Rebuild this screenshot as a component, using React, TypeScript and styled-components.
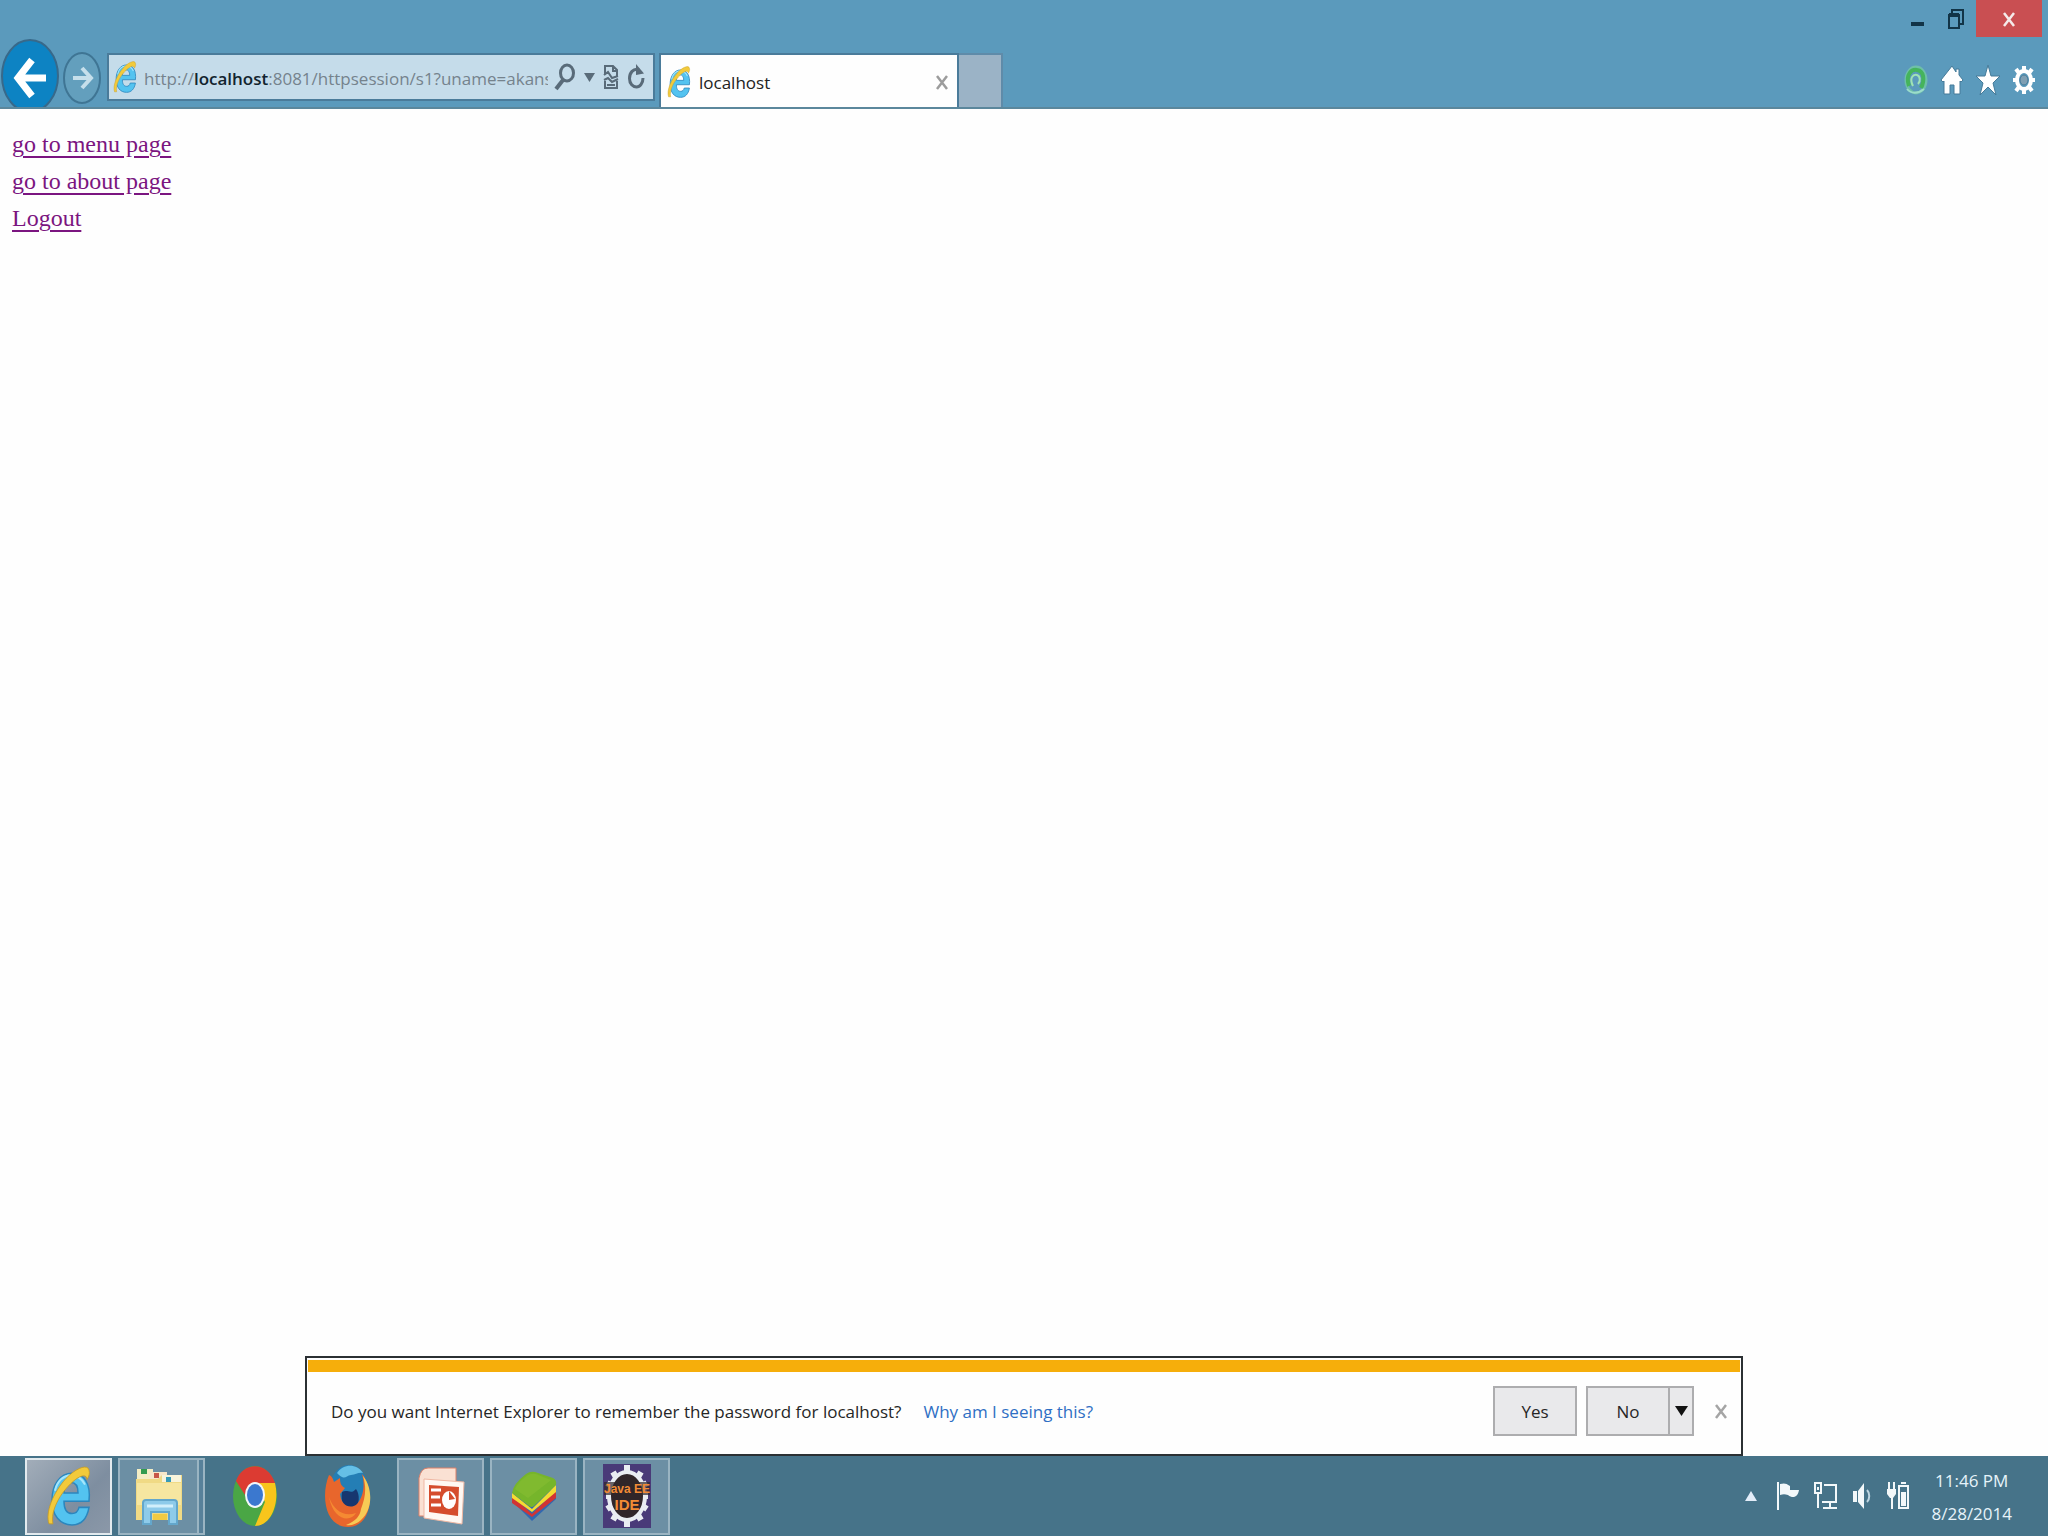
import React, { useState } from "react";
import styled, { createGlobalStyle, css } from "styled-components";

const ui = `"Open Sans", "Noto Sans", sans-serif`;

const GlobalStyle = createGlobalStyle`
  *, *::before, *::after { box-sizing: border-box; }
  body { margin: 0; background: #fefefe; font-family: ${ui}; font-size: 17px; }
  button, input { font: inherit; color: inherit; margin: 0; padding: 0; border: 0; background: none; }
  svg { display: block; flex: none; }
`;

const Desktop = styled.div`
  display: flex;
  flex-direction: column;
  min-height: 100vh;
`;

/* ---------- browser chrome ---------- */

const Chrome = styled.header`
  display: flex;
  flex-direction: column;
  background: #5b9abc;
  border-bottom: 2px solid #5b879c;
`;

const TitleBar = styled.div`
  display: flex;
  justify-content: flex-end;
  gap: 2px;
  height: 37px;
  padding-right: 6px;
`;

const WindowButton = styled.button<{ $close?: boolean }>`
  display: flex;
  align-items: center;
  justify-content: center;
  width: ${(p) => (p.$close ? 66 : 36)}px;
  background: ${(p) => (p.$close ? "#c94f52" : "transparent")};
`;

const NavRow = styled.div`
  display: flex;
  align-items: flex-end;
  height: 70px;
  overflow: hidden;
`;

const HistoryButtons = styled.div`
  display: flex;
  align-items: center;
  align-self: stretch;
  gap: 4px;
  width: 107px;
  padding-left: 1px;
`;

const PlainButton = styled.button`
  display: flex;
  align-items: center;
  justify-content: center;
`;

const AddressBar = styled.form`
  display: flex;
  align-items: center;
  align-self: flex-start;
  width: 548px;
  height: 48px;
  margin: 16px 4px 0 0;
  padding: 0 8px 0 4px;
  background: #c5dcea;
  border: 2px solid #4a7b9a;
`;

const AddressField = styled.label`
  position: relative;
  flex: 1;
  min-width: 0;
  height: 100%;
  margin: 0 6px 0 7px;
  overflow: hidden;
  line-height: 48px;
  color: #75838d;
`;

const AddressInput = styled.input`
  width: 100%;
  height: 100%;
  outline: none;
  color: #1c2a33;
`;

const AddressText = styled.span`
  position: absolute;
  inset: 0;
  white-space: nowrap;
  pointer-events: none;
`;

const Host = styled.span`
  font-weight: 600;
  color: #12242e;
`;

const AddressTools = styled.div`
  display: flex;
  align-items: center;
  gap: 8px;
`;

const Tab = styled.div`
  display: flex;
  align-items: center;
  width: 300px;
  height: 54px;
  padding: 2px 8px 0 6px;
  background: #fefefe;
  border: 2px solid #4a7b9a;
  border-bottom: 0;
`;

const TabTitle = styled.span`
  flex: 1;
  margin-left: 8px;
  color: #222;
`;

const NewTab = styled.button`
  width: 44px;
  height: 54px;
  background: #9bb3c6;
  border: 2px solid #5f8ba9;
  border-width: 2px 2px 0 0;
`;

const Commands = styled.div`
  display: flex;
  align-items: center;
  gap: 12px;
  height: 54px;
  margin-left: auto;
  padding-right: 12px;
`;

/* ---------- page ---------- */

const Page = styled.main`
  flex: 1;
  display: flex;
  flex-direction: column;
  align-items: flex-start;
  padding: 17px 12px;
`;

const PageLink = styled.a`
  font-family: "Liberation Serif", serif;
  font-size: 24px;
  line-height: 37px;
  color: #7b1580;
  text-decoration: underline;
  text-decoration-thickness: 2px;
  text-underline-offset: 4px;
`;

/* ---------- notification ---------- */

const Notice = styled.section`
  align-self: center;
  width: calc(100% - 64px);
  max-width: 1438px;
  padding: 2px 1px 0;
  background: #fefefe;
  border: 2px solid #2b3033;
`;

const NoticeStripe = styled.div`
  height: 12px;
  background: #f6ae0b;
`;

const NoticeBody = styled.div`
  display: flex;
  align-items: center;
  height: 82px;
  padding: 0 12px 4px 23px;
  color: #262626;
`;

const WhyLink = styled.a`
  margin-left: 22px;
  color: #2f6fc4;
  text-decoration: none;
`;

const NoticeActions = styled.div`
  display: flex;
  align-items: center;
  margin-left: auto;
`;

const face = css`
  height: 50px;
  background: #e9e9eb;
  border: 2px solid #adadaf;
`;

const ActionButton = styled.button`
  ${face}
  width: 84px;
`;

const SplitButton = styled.div`
  display: flex;
  margin: 0 20px 0 9px;
`;

const SplitArrow = styled.button`
  ${face}
  display: flex;
  align-items: center;
  justify-content: center;
  width: 24px;
  border-left: 0;
`;

/* ---------- taskbar ---------- */

const Taskbar = styled.footer`
  display: flex;
  align-items: center;
  justify-content: space-between;
  height: 80px;
  padding: 0 36px 0 25px;
  background: #467389;
`;

const Apps = styled.nav`
  display: flex;
  gap: 6px;
`;

const AppButton = styled.button<{ $state?: "active" | "open" }>`
  display: flex;
  align-items: center;
  justify-content: center;
  width: 87px;
  height: 77px;
  border: 2px solid transparent;
  ${(p) => p.$state === "active" && css`
    background: linear-gradient(135deg, #a2adb9, #7e8ea0 60%, #8b98a8);
    border-color: #e2eaee;
  `}
  ${(p) => p.$state === "open" && css`
    background: #6c8fa4;
    border-color: #9ab4c2;
  `}
`;

const AppStack = styled.div`
  display: flex;
  &::after {
    content: "";
    width: 6px;
    background: #58819a;
    border: 2px solid #9ab4c2;
    border-left: 0;
  }
  ${AppButton} { width: 81px; }
`;

const Tray = styled.div`
  display: flex;
  align-items: center;
  gap: 12px;
`;

const Clock = styled.time`
  margin: 2px 0 0 8px;
  line-height: 33px;
  text-align: center;
  color: #e6f3fa;
`;

/* ---------- drawings ---------- */

const IELogo = ({ w, h }: { w: number; h: number }) => (
  <svg width={w} height={h} viewBox="0 0 46 62" preserveAspectRatio="none">
    <path d="M43 36H18c0 8 3 12 8 12 4 0 6-2 7-6h10c-2 11-8 17-17 17C14 59 6 50 6 35 6 20 14 9 26 9c12 0 19 10 17 27ZM18 28h14c0-6-2-10-7-10s-7 4-7 10Z" fill="#53c3f0" stroke="#2c86bd" strokeWidth="1.5" fillRule="evenodd" />
    <path d="M9 26c2-9 8-15 16-15 6 0 11 3 14 9" fill="none" stroke="#a6e6fb" strokeWidth="2" />
    <path d="M3 58C-1 47 7 28 20 14 31 3 42 0 43 6c1 3 0 6-2 9 0-5-6-5-14 2C14 28 4 46 7 58Z" fill="#f2ca3b" stroke="#c79b23" strokeWidth=".8" />
  </svg>
);

const Cross = ({ color }: { color: string }) => (
  <svg width="14" height="18" viewBox="0 0 14 18">
    <path d="M2 3 12 16M12 3 2 16" stroke={color} strokeWidth="2.500" fill="none" />
  </svg>
);

const Back = () => (
  <svg width="58" height="70" viewBox="0 0 58 70">
    <ellipse cx="29" cy="39" rx="28" ry="36" fill="#0d83c3" stroke="#38698a" strokeWidth="2" />
    <path d="M45 41H17M31 23 17 41l14 18" fill="none" stroke="#fff" strokeWidth="7" />
  </svg>
);

const Forward = () => (
  <svg width="40" height="70" viewBox="0 -14 40 70">
    <ellipse cx="19" cy="27" rx="18" ry="25" fill="#639fbd" stroke="#3f7594" strokeWidth="2" />
    <path d="M10 27h18M19 17l9 10-9 10" fill="none" stroke="#c5dfeb" strokeWidth="4" />
  </svg>
);

const Search = () => (
  <svg width="22" height="28" viewBox="0 0 22 28">
    <ellipse cx="13" cy="10" rx="6.500" ry="8" fill="none" stroke="#596b79" strokeWidth="3" />
    <path d="M9 17 2 26" stroke="#596b79" strokeWidth="4" />
  </svg>
);

const Down = ({ color = "#596b79", w = 11, h = 9 }: { color?: string; w?: number; h?: number }) => (
  <svg width={w} height={h} viewBox="0 0 12 10" preserveAspectRatio="none">
    <path d="M0 0h12L6 10Z" fill={color} />
  </svg>
);

const Compat = () => (
  <svg width="16" height="26" viewBox="0 0 16 26" fill="none" stroke="#596b79" strokeWidth="2">
    <path d="M2 11V2h8l4 4v7M2 15v9h12v-7M10 2v5h4M1 11l4-3 4 6 6-2M1 16l4-2 4 4 6-3M4 21h8" />
  </svg>
);

const Refresh = () => (
  <svg width="18" height="26" viewBox="0 0 18 26">
    <path d="M12 5.500C6 4 2.500 9 2.500 14.500S6 23 9.500 23s6.500-4 6.500-9" fill="none" stroke="#596b79" strokeWidth="3" />
    <path d="M9 0v11l8-1.500Z" fill="#596b79" />
  </svg>
);

const Swirl = () => (
  <svg width="24" height="30" viewBox="0 0 24 30" fill="none">
    <ellipse cx="12" cy="15" rx="10" ry="13" stroke="#77cfa2" strokeWidth="3" opacity=".7" />
    <path d="M5 21C1 9 8 4 13 5c7 1 8 10 4 18" stroke="#45b45c" strokeWidth="4" />
    <path d="M9 21c-4-8 0-12 4-11 3 1 4 6 1 9" stroke="#a0e3b4" strokeWidth="2" />
    <path d="M3 24c4 5 11 5 17 0" stroke="#9bdccb" strokeWidth="2" />
  </svg>
);

const Home = () => (
  <svg width="24" height="30" viewBox="0 0 24 30">
    <path d="M12 1 1 15l2 2 1-1v13h6v-9h4v9h6V16l1 1 2-2-4-5V4h-3v3Z" fill="#fff" stroke="#467b99" />
  </svg>
);

const Star = () => (
  <svg width="24" height="30" viewBox="0 0 24 30">
    <path d="m12 0 3 11h9l-7 7 3 12-8-8-8 8 3-12-7-7h9Z" fill="#fff" stroke="#467b99" />
  </svg>
);

const Gear = () => (
  <svg width="24" height="30" viewBox="0 0 24 30">
    <g stroke="#fff" strokeWidth="4">
      <path d="M12 1v28M1 15h22M4 4l16 22M20 4 4 26" />
    </g>
    <ellipse cx="12" cy="15" rx="7" ry="9" fill="#5b9abc" stroke="#fff" strokeWidth="4" />
    <ellipse cx="12" cy="15" rx="4" ry="5" fill="#7f9fb3" stroke="#467b99" />
  </svg>
);

const Explorer = () => (
  <svg width="48" height="58" viewBox="0 0 48 58">
    <path d="M2 2h16v10H2Z" fill="#f3edc5" />
    <path d="M14 5h18v10H14Z" fill="#f8e7c9" />
    <path d="M1 12h22l4-4h20v45H1Z" fill="#f0da85" />
    <path d="M27 8h19v7H27Z" fill="#f8f4db" />
    <path d="M2 16h44v22H2Z" fill="#f6e6a0" />
    <path d="M6 2h6v5H6Z" fill="#329b50" />
    <path d="M19 6h5v5h-5Z" fill="#c75648" />
    <path d="M31 10h5v5h-5Z" fill="#379bb8" />
    <path d="M8 57V36q0-3 3-3h28q3 0 3 3v21h-8V45H16v12Z" fill="#8ecbea" stroke="#63a7cc" strokeWidth="2" />
    <path d="M12 39h26" stroke="#d2effb" strokeWidth="3" />
    <path d="M18 47h14v6H18Z" fill="#f2ca42" />
  </svg>
);

const ChromeLogo = () => (
  <svg width="44" height="62" viewBox="0 0 44 62">
    <ellipse cx="22" cy="31" rx="22" ry="30" fill="#4aa645" />
    <path d="M3 16C10-4 35-4 42 18H22L12 30Z" fill="#dc3b32" />
    <path d="M22 18h20c5 20-4 43-20 43l10-24Z" fill="#f8c51c" />
    <ellipse cx="22" cy="30" rx="10" ry="13" fill="#f4f7fa" />
    <ellipse cx="22" cy="30" rx="8" ry="11" fill="#3b78cf" />
  </svg>
);

const FirefoxLogo = () => (
  <svg width="46" height="64" viewBox="0 0 46 64">
    <ellipse cx="24" cy="28" rx="20" ry="27" fill="#247eb5" />
    <path d="M12 9C19-1 32 0 38 9c-5-1-7 2-12 2-6 1-6 6-14-2Z" fill="#65bfe6" />
    <path d="M17 28c6-3 9 3 14-3 4 5 4 16-2 20-7 3-14-4-12-17Z" fill="#17366f" />
    <path d="M4 11c3 1 4 4 5 7l6-4c0 5 1 8 5 10l-5 6c1 11 10 16 17 10 7-8 8-20 5-30 13 15 11 53-14 53C-1 63-4 30 4 11Z" fill="#e8662c" />
    <path d="M38 12c10 12 10 34-2 44-4 4-10 6-15 5 10-4 14-9 15-16 4-11 6-20 2-33Z" fill="#f7ca55" />
    <path d="M4 33c5 14 15 20 27 16-5 9-22 9-27-16Z" fill="#f58a32" />
  </svg>
);

const PowerPoint = () => (
  <svg width="48" height="60" viewBox="0 0 48 60">
    <path d="M2 12Q4 2 11 2h28v48H2Z" fill="#fae1d3" stroke="#dc8068" />
    <path d="m7 13 40 3-2 42-38-6Z" fill="#fff8f2" stroke="#efb7a3" />
    <path d="m12 19 30 2-1 29-29-4Z" fill="#d54d2d" />
    <path d="M14 24h10M14 31h9M14 39h10" stroke="#fff" strokeWidth="3" />
    <ellipse cx="32" cy="34" rx="7" ry="9" fill="#fff" />
    <path d="M32 34V25l6 8Z" fill="#d54d2d" />
  </svg>
);

const BlueStacks = () => (
  <svg width="46" height="52" viewBox="0 0 46 52">
    <path d="m1 31 20 20 24-22v-9L1 24Z" fill="#3268b0" />
    <path d="m1 26 20 18 24-24v8L21 47 1 33Z" fill="#d13434" />
    <path d="m1 23 20 16 24-24v7L21 42 1 28Z" fill="#f4dc31" />
    <path d="M1 23Q2 14 15 4q4-3 9-2l18 6q4 2 3 7L23 36q-2 2-5 0Z" fill="#76b52b" />
    <path d="M4 19Q7 12 17 5q4-2 8-1l15 6-23 18Z" fill="#8ac034" opacity=".5" />
  </svg>
);

const JavaEE = () => (
  <svg width="48" height="64" viewBox="0 0 48 64">
    <path d="M0 0h48v64H0Z" fill="#493a78" />
    <g stroke="#e9edf2" strokeWidth="6">
      <path d="M24 1v62M3 32h42M10 8l28 48M38 8 10 56M4 19l40 26M44 19 4 45" />
    </g>
    <ellipse cx="24" cy="32" rx="18" ry="24" fill="#302629" stroke="#e9edf2" strokeWidth="4" />
    <path d="M1 18h46v13H1Z" fill="#302629" opacity=".7" />
    <g fill="#f28b35" fontFamily="Liberation Sans, Arial, sans-serif" fontWeight="700" textAnchor="middle">
      <text x="24" y="29" fontSize="12">Java EE</text>
      <text x="24" y="46" fontSize="15">IDE</text>
    </g>
  </svg>
);

const Flag = () => (
  <svg width="26" height="32" viewBox="0 0 26 32">
    <path d="M3 2v28" stroke="#f3f8fa" strokeWidth="2" />
    <path d="M5 4c4-1 6-1 10 2v4h9c-1 7-6 9-11 5-3-1-5-1-8 0Z" fill="#f3f8fa" />
  </svg>
);

const Network = () => (
  <svg width="26" height="32" viewBox="0 0 26 32" fill="none" stroke="#f3f8fa" strokeWidth="2">
    <path d="M2 3h6v10H2ZM5 13v15M5 7v3M11 5h12v17H9M17 22v6M10 28h14" />
  </svg>
);

const Speaker = () => (
  <svg width="22" height="32" viewBox="0 0 22 32">
    <path d="M2 11h4v11H2ZM7 11l6-8v26l-6-7Z" fill="#f3f8fa" />
    <path d="M16 10c3 3 3 9 0 12" stroke="#bdd5e1" strokeWidth="2" fill="none" />
  </svg>
);

const Battery = () => (
  <svg width="26" height="32" viewBox="0 0 26 32" fill="none" stroke="#f3f8fa" strokeWidth="2">
    <path d="M4 2v7M9 2v7M7 16v13M14 6h9v22h-9ZM16 3h5" />
    <path d="M2 9h9v5l-3 4H5l-3-4Z" fill="#f3f8fa" stroke="none" />
    <path d="M16 12h5v14h-5Z" fill="#f3f8fa" stroke="none" />
  </svg>
);

/* ---------- screen ---------- */

export default function App() {
  const [url, setUrl] = useState("http://localhost:8081/httpsession/s1?uname=akans");
  const [editing, setEditing] = useState(false);
  const [noticeOpen, setNoticeOpen] = useState(true);
  const parts = url.match(/^(\w+:\/\/)?([^:/]*)(.*)$/) ?? ["", "", url, ""];
  const dismiss = () => setNoticeOpen(false);

  return (
    <Desktop>
      <GlobalStyle />
      <Chrome>
        <TitleBar>
          <WindowButton aria-label="Minimize">
            <svg width="14" height="18" viewBox="0 0 14 18"><path d="M0 12h13v4H0Z" fill="#123447" /></svg>
          </WindowButton>
          <WindowButton aria-label="Restore">
            <svg width="18" height="22" viewBox="0 0 18 22" fill="none" stroke="#123447" strokeWidth="2">
              <path d="M5 5V2h11v14h-3M2 7h10v13H2Z" /><path d="M2 7h10" strokeWidth="4" />
            </svg>
          </WindowButton>
          <WindowButton $close aria-label="Close window"><Cross color="#f5eaea" /></WindowButton>
        </TitleBar>
        <NavRow>
          <HistoryButtons>
            <PlainButton aria-label="Back"><Back /></PlainButton>
            <PlainButton aria-label="Forward"><Forward /></PlainButton>
          </HistoryButtons>
          <AddressBar onSubmit={(e) => e.preventDefault()}>
            <IELogo w={24} h={34} />
            <AddressField>
              <AddressInput
                aria-label="Address"
                value={editing ? url : ""}
                onFocus={() => setEditing(true)}
                onBlur={() => setEditing(false)}
                onChange={(e) => setUrl(e.target.value)}
              />
              {!editing && (
                <AddressText>{parts[1]}<Host>{parts[2]}</Host>{parts[3]}</AddressText>
              )}
            </AddressField>
            <AddressTools>
              <PlainButton type="button" aria-label="Search"><Search /></PlainButton>
              <PlainButton type="button" aria-label="Show address history"><Down /></PlainButton>
              <PlainButton type="button" aria-label="Compatibility view"><Compat /></PlainButton>
              <PlainButton type="button" aria-label="Refresh"><Refresh /></PlainButton>
            </AddressTools>
          </AddressBar>
          <Tab>
            <IELogo w={24} h={34} />
            <TabTitle>localhost</TabTitle>
            <PlainButton aria-label="Close tab"><Cross color="#9c9c9c" /></PlainButton>
          </Tab>
          <NewTab aria-label="New tab" />
          <Commands>
            <PlainButton aria-label="Add-on"><Swirl /></PlainButton>
            <PlainButton aria-label="Home"><Home /></PlainButton>
            <PlainButton aria-label="Favorites"><Star /></PlainButton>
            <PlainButton aria-label="Tools"><Gear /></PlainButton>
          </Commands>
        </NavRow>
      </Chrome>

      <Page>
        <PageLink href="#menu">go to menu page</PageLink>
        <PageLink href="#about">go to about page</PageLink>
        <PageLink href="#logout">Logout</PageLink>
      </Page>

      {noticeOpen && (
        <Notice>
          <NoticeStripe />
          <NoticeBody>
            <span>Do you want Internet Explorer to remember the password for localhost?</span>
            <WhyLink href="#why">Why am I seeing this?</WhyLink>
            <NoticeActions>
              <ActionButton onClick={dismiss}>Yes</ActionButton>
              <SplitButton>
                <ActionButton onClick={dismiss}>No</ActionButton>
                <SplitArrow aria-label="More options"><Down color="#111" w={13} h={10} /></SplitArrow>
              </SplitButton>
              <PlainButton aria-label="Dismiss" onClick={dismiss}><Cross color="#a5a5a5" /></PlainButton>
            </NoticeActions>
          </NoticeBody>
        </Notice>
      )}

      <Taskbar>
        <Apps aria-label="Applications">
          <AppButton $state="active" aria-label="Internet Explorer"><IELogo w={46} h={64} /></AppButton>
          <AppStack><AppButton $state="open" aria-label="File Explorer"><Explorer /></AppButton></AppStack>
          <AppButton aria-label="Chrome"><ChromeLogo /></AppButton>
          <AppButton aria-label="Firefox"><FirefoxLogo /></AppButton>
          <AppButton $state="open" aria-label="PowerPoint"><PowerPoint /></AppButton>
          <AppButton $state="open" aria-label="BlueStacks"><BlueStacks /></AppButton>
          <AppButton $state="open" aria-label="Java EE IDE"><JavaEE /></AppButton>
        </Apps>
        <Tray>
          <PlainButton aria-label="Show hidden icons">
            <svg width="18" height="10" viewBox="0 0 18 10"><path d="M0 10h12L6 0Z" fill="#e3edf9" /></svg>
          </PlainButton>
          <PlainButton aria-label="Action center"><Flag /></PlainButton>
          <PlainButton aria-label="Network"><Network /></PlainButton>
          <PlainButton aria-label="Volume"><Speaker /></PlainButton>
          <PlainButton aria-label="Battery"><Battery /></PlainButton>
          <Clock dateTime="2014-08-28T23:46">11:46 PM<br />8/28/2014</Clock>
        </Tray>
      </Taskbar>
    </Desktop>
  );
}
